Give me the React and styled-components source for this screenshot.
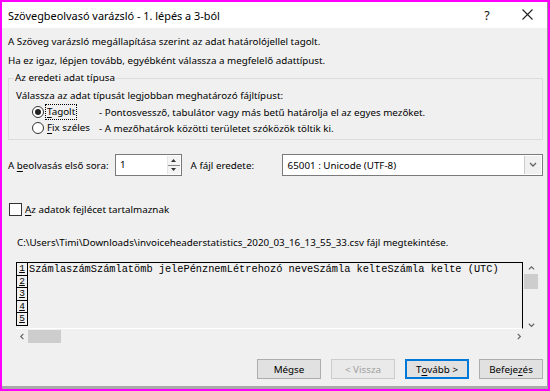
import React from 'react';
import styled, { createGlobalStyle } from 'styled-components';

const GlobalStyle = createGlobalStyle`
  html, body {
    margin: 0;
    padding: 0;
    background: #ff00ff;
  }
  body {
    width: 550px;
    height: 391px;
    overflow: hidden;
    font-family: 'Noto Sans', 'DejaVu Sans', sans-serif;
    font-size: 9.8px;
    color: #000;
  }
`;

const Frame = styled.div`
  margin: 2px 2px 0 2px;
  width: 545px;
  height: 384px;
  border-right: 1px solid #9a9a9a;
  background: #f0f0f0;
  display: flex;
  flex-direction: column;
`;

const TitleBar = styled.div`
  height: 26px;
  background: #fff;
  display: flex;
  align-items: center;
  padding-left: 6px;
  font-size: 10.9px;
`;

const TitleText = styled.div`
  flex: 1;
`;

const TitleButton = styled.div`
  width: 40px;
  text-align: center;
  font-size: 12.5px;
  color: #111;
`;

const Under = styled.span`
  text-decoration: underline;
  text-underline-offset: 2px;
`;

const Body = styled.div`
  padding: 4px 4px 0 6px;
  display: flex;
  flex-direction: column;
`;

const Line = styled.div`
  line-height: 19px;
  white-space: nowrap;
`;

const Group = styled.fieldset`
  margin: 0;
  padding: 0 7px 3px 7px;
  border: 1px solid #dcdcdc;
  min-width: 0;
`;

const Legend = styled.legend`
  padding: 0 1px;
  margin-left: -2px;
  line-height: 16px;
`;

const GroupText = styled.div`
  line-height: 16px;
  margin-top: 2px;
`;

const RadioRow = styled.div`
  display: grid;
  grid-template-columns: 12px 51px auto;
  column-gap: 2px;
  align-items: center;
  height: 16px;
  padding-left: 16px;
  white-space: nowrap;
`;

const Radio = styled.span`
  width: 12px;
  height: 12px;
  box-sizing: border-box;
  border-radius: 50%;
  border: 1px solid #333;
  background: #fff;
  display: flex;
  align-items: center;
  justify-content: center;
  &::after {
    content: '';
    width: 6px;
    height: 6px;
    border-radius: 50%;
    background: ${p => (p.$checked ? '#222' : 'transparent')};
  }
`;

const RadioLabel = styled.span`
  justify-self: start;
  padding: 0 1px;
  outline: ${p => (p.$focus ? '1px dotted #000' : 'none')};
  line-height: 14px;
`;

const FieldRow = styled.div`
  margin-top: 14px;
  display: flex;
  align-items: center;
  height: 22px;
  white-space: nowrap;
`;

const FieldLabel = styled.span`
  width: ${p => p.$w}px;
  padding-left: ${p => p.$pad || 0}px;
  flex: none;
`;

const Spin = styled.div`
  width: 67px;
  height: 22px;
  box-sizing: border-box;
  border: 1px solid #7a7a7a;
  background: #fff;
  display: flex;
`;

const SpinValue = styled.div`
  flex: 1;
  padding-left: 4px;
  line-height: 20px;
`;

const SpinButtons = styled.div`
  width: 12px;
  display: flex;
  flex-direction: column;
  border-left: 1px solid #e6e6e6;
  margin: 1px 1px 1px 0;
`;

const SpinHalf = styled.div`
  flex: 1;
  background: #f4f4f4;
  display: flex;
  align-items: center;
  justify-content: center;
  & + & {
    border-top: 1px solid #888;
  }
`;

const Select = styled.div`
  width: 263px;
  height: 22px;
  box-sizing: border-box;
  border: 1px solid #7a7a7a;
  background: #fff;
  display: flex;
  align-items: center;
`;

const SelectValue = styled.div`
  flex: 1;
  padding-left: 5px;
`;

const SelectArrow = styled.div`
  width: 16px;
  height: 18px;
  margin-right: 1px;
  border-left: 1px solid #ccc;
  background: #f0f0f0;
  display: flex;
  align-items: center;
  justify-content: center;
`;

const CheckRow = styled.div`
  margin-top: 26px;
  display: flex;
  align-items: center;
  height: 14px;
  padding-left: 1px;
`;

const CheckBox = styled.span`
  width: 13px;
  height: 13px;
  box-sizing: border-box;
  border: 1px solid #333;
  background: #fff;
  margin-right: 3px;
`;

const PathLine = styled.div`
  margin-top: 19px;
  padding-left: 9px;
  line-height: 16px;
  white-space: nowrap;
`;

const Preview = styled.div`
  margin: 11px 0 0 8px;
  width: 523px;
  display: grid;
  grid-template-columns: 507px 16px;
  grid-template-rows: 67px 14px;
`;

const PreviewArea = styled.div`
  border-top: 1px solid #000;
  border-right: 1px solid #000;
  border-bottom: 1px solid #fff;
  overflow: hidden;
  display: flex;
  flex-direction: column;
`;

const PreviewRow = styled.div`
  display: flex;
  height: 12.6px;
  font-family: 'Liberation Mono', 'DejaVu Sans Mono', monospace;
  font-size: 10.3px;
  line-height: 12px;
  white-space: nowrap;
`;

const RowNum = styled.span`
  width: 12px;
  flex: none;
  box-sizing: border-box;
  border-left: 1px solid #000;
  border-right: 1px solid #000;
  border-bottom: 1px solid #000;
  text-align: center;
  text-decoration: underline;
  font-size: 9.5px;
  margin-right: 1px;
`;

const VScroll = styled.div`
  display: flex;
  flex-direction: column;
  align-items: center;
  padding-top: 3px;
`;

const Thumb = styled.div`
  background: #cdcdcd;
  width: ${p => p.$w}px;
  height: ${p => p.$h}px;
  margin: ${p => p.$m || '0'};
`;

const Spacer = styled.div`
  flex: 1;
`;

const HScroll = styled.div`
  display: flex;
  align-items: center;
  padding-left: 3px;
`;

const Buttons = styled.div`
  margin-top: 16px;
  display: flex;
  justify-content: flex-end;
  gap: 10px;
`;

const Button = styled.div`
  width: 64px;
  height: 20px;
  box-sizing: border-box;
  border: ${p => (p.$default ? '2px' : '1px')} solid;
  border-color: ${p => (p.$disabled ? '#cccccc' : p.$default ? '#0078d7' : '#adadad')};
  background: ${p => (p.$disabled ? '#eaeaea' : '#e1e1e1')};
  color: ${p => (p.$disabled ? '#a0a0a0' : '#000')};
  display: flex;
  align-items: center;
  justify-content: center;
`;

const Bottom = styled.div`
  margin-left: 2px;
  width: 546px;
  height: 3px;
  background: #a9a9a9;
`;

const Chevron = ({ dir, size = 7 }) => {
  const paths = {
    up: 'M1 5 L4 2 L7 5',
    down: 'M1 2 L4 5 L7 2',
    left: 'M5 1 L2 4 L5 7',
    right: 'M2 1 L5 4 L2 7',
  };
  return (
    <svg width={size} height={size} viewBox="0 0 8 8">
      <path d={paths[dir]} fill="none" stroke="#606060" strokeWidth="1.3" />
    </svg>
  );
};

const Tri = ({ up }) => (
  <svg width="5" height="3" viewBox="0 0 5 3">
    <path d={up ? 'M0 3 L2.5 0 L5 3 Z' : 'M0 0 L2.5 3 L5 0 Z'} fill="#333" />
  </svg>
);

const rows = [
  'SzámlaszámSzámlatömb jelePénznemLétrehozó neveSzámla kelteSzámla kelte (UTC)',
  '',
  '',
  '',
  '',
];

export default function App() {
  return (
    <>
      <GlobalStyle />
      <Frame>
        <TitleBar>
          <TitleText>Szövegbeolvasó varázsló - 1. lépés a 3-ból</TitleText>
          <TitleButton>?</TitleButton>
          <TitleButton>
            <svg width="11" height="11" viewBox="0 0 11 11">
              <path d="M0.5 0.5 L10.5 10.5 M10.5 0.5 L0.5 10.5" stroke="#222" strokeWidth="1.1" />
            </svg>
          </TitleButton>
        </TitleBar>
        <Body>
          <Line>A Szöveg varázsló megállapítása szerint az adat határolójellel tagolt.</Line>
          <Line>Ha ez igaz, lépjen tovább, egyébként válassza a megfelelő adattípust.</Line>
          <Group>
            <Legend>Az eredeti adat típusa</Legend>
            <GroupText>Válassza az adat típusát legjobban meghatározó fájltípust:</GroupText>
            <RadioRow>
              <Radio $checked />
              <RadioLabel $focus>
                <Under>T</Under>agolt
              </RadioLabel>
              <span>- Pontosvessző, tabulátor vagy más betű határolja el az egyes mezőket.</span>
            </RadioRow>
            <RadioRow>
              <Radio />
              <RadioLabel>
                <Under>F</Under>ix széles
              </RadioLabel>
              <span>- A mezőhatárok közötti területet szóközök töltik ki.</span>
            </RadioRow>
          </Group>
          <FieldRow>
            <FieldLabel $w={107}>
              A <Under>b</Under>eolvasás első sora:
            </FieldLabel>
            <Spin>
              <SpinValue>1</SpinValue>
              <SpinButtons>
                <SpinHalf>
                  <Tri up />
                </SpinHalf>
                <SpinHalf>
                  <Tri />
                </SpinHalf>
              </SpinButtons>
            </Spin>
            <FieldLabel $w={91} $pad={9}>
              A fá<Under>j</Under>l eredete:
            </FieldLabel>
            <Select>
              <SelectValue>65001 : Unicode (UTF-8)</SelectValue>
              <SelectArrow>
                <Chevron dir="down" size={8} />
              </SelectArrow>
            </Select>
          </FieldRow>
          <CheckRow>
            <CheckBox />
            <span>
              <Under>A</Under>z adatok fejlécet tartalmaznak
            </span>
          </CheckRow>
          <PathLine>
            C:\Users\Timi\Downloads\invoiceheaderstatistics_2020_03_16_13_55_33.csv fájl megtekintése.
          </PathLine>
          <Preview>
            <PreviewArea>
              {rows.map((r, i) => (
                <PreviewRow key={i}>
                  <RowNum>{i + 1}</RowNum>
                  <span>{r}</span>
                </PreviewRow>
              ))}
            </PreviewArea>
            <VScroll>
              <Chevron dir="up" />
              <Thumb $w={14} $h={15} $m="2px 0 0 0" />
              <Spacer />
              <Chevron dir="down" />
            </VScroll>
            <HScroll>
              <Chevron dir="left" />
              <Thumb $w={33} $h={13} $m="0 0 0 2px" />
              <Spacer />
              <Chevron dir="right" />
            </HScroll>
          </Preview>
          <Buttons>
            <Button>Mégse</Button>
            <Button $disabled>&lt; Vissza</Button>
            <Button $default>
              T<Under>o</Under>vább &gt;
            </Button>
            <Button>
              Befeje<Under>z</Under>és
            </Button>
          </Buttons>
        </Body>
      </Frame>
      <Bottom />
    </>
  );
}
